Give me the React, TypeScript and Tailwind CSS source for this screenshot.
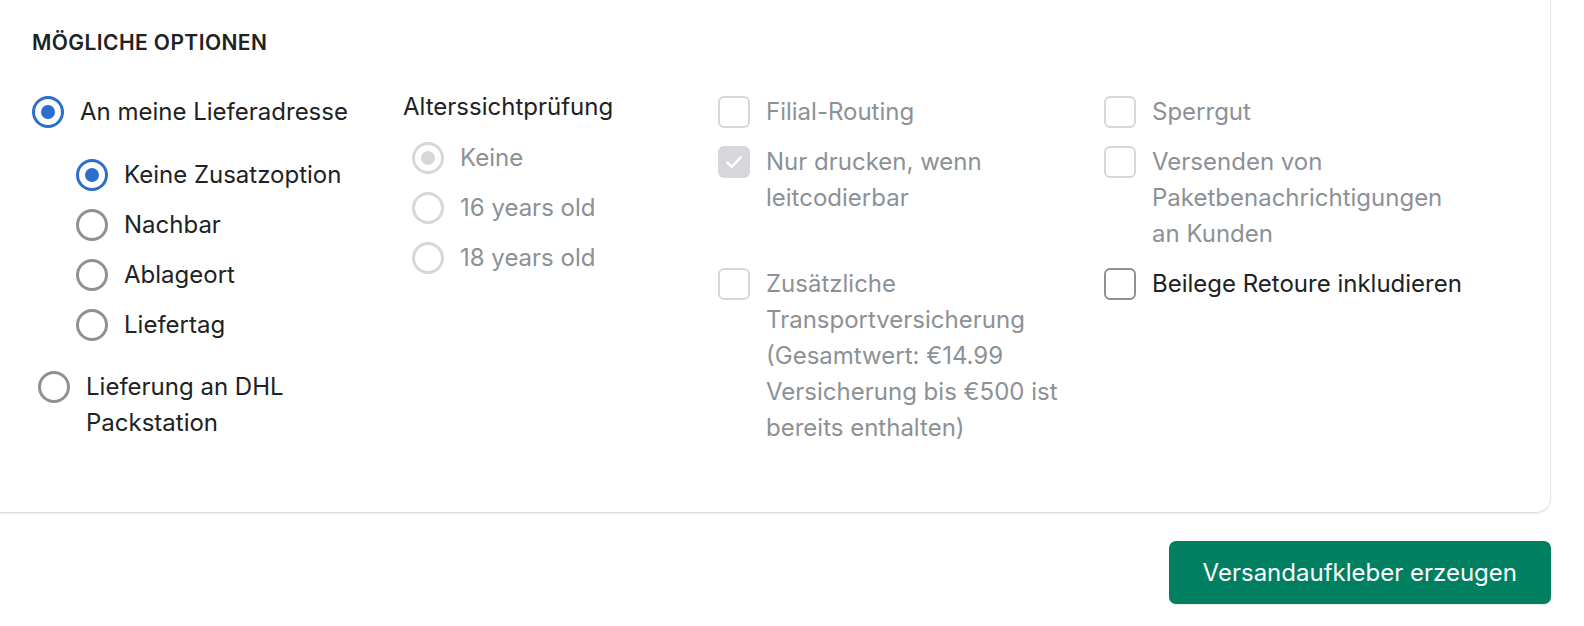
import { FC, ReactNode } from 'react';

const FONT = { fontFamily: 'Inter, "Noto Sans", "Liberation Sans", sans-serif' };

interface RadioProps {
  label: ReactNode;
  checked?: boolean;
  disabled?: boolean;
  className?: string;
}

const Radio: FC<RadioProps> = ({ label, checked, disabled, className = '' }) => {
  const ring = disabled
    ? 'border-[#d5d7da]'
    : checked
    ? 'border-[#2c6ecb]'
    : 'border-[#8c9196]';
  const dot = disabled ? 'bg-[#d5d7da]' : 'bg-[#2c6ecb]';
  return (
    <label className={`flex items-start gap-[16px] ${className}`}>
      <span
        className={`mt-[2px] w-[32px] h-[32px] shrink-0 rounded-full border-[3px] ${ring} flex items-center justify-center bg-white`}
      >
        {checked && <span className={`w-[14px] h-[14px] rounded-full ${dot}`} />}
      </span>
      <span className={`leading-[36px] ${disabled ? 'text-[#8c9196]' : 'text-[#202223]'}`}>
        {label}
      </span>
    </label>
  );
};

interface CheckProps {
  label: ReactNode;
  checked?: boolean;
  disabled?: boolean;
}

const Check: FC<CheckProps> = ({ label, checked, disabled }) => {
  let box = 'border-[2px] border-[#8c9196] bg-white';
  if (disabled) box = checked ? 'bg-[#d5d7da]' : 'border-[2px] border-[#d5d7da] bg-white';
  return (
    <label className="flex items-start gap-[16px]">
      <span
        className={`mt-[2px] w-[32px] h-[32px] shrink-0 rounded-[6px] ${box} flex items-center justify-center`}
      >
        {checked && (
          <svg viewBox="0 0 20 20" className="w-[24px] h-[24px]" fill="none">
            <path d="M4.5 10.5l3.6 3.6L15.5 6.2" stroke="#fff" strokeWidth="2.2" strokeLinecap="round" strokeLinejoin="round" />
          </svg>
        )}
      </span>
      <span className={`leading-[36px] ${disabled ? 'text-[#8c9196]' : 'text-[#202223]'}`}>
        {label}
      </span>
    </label>
  );
};

export default function App() {
  return (
    <div className="min-h-[626px] w-[1584px] bg-white overflow-hidden text-[24px]" style={FONT}>
      <div className="ml-[-10px] w-[1560px] bg-white rounded-br-[14px] shadow-[0_1px_3px_rgba(0,0,0,0.15),0_0_0_1px_rgba(63,63,68,0.05)] pl-[42px] pr-[32px] pt-[30px] pb-[66px]">
        <h2 className="text-[21px] font-semibold tracking-[0.02em] text-[#202223] uppercase leading-[26px]">
          Mögliche Optionen
        </h2>

        <div className="flex mt-[38px]">
          {/* Zustellung */}
          <div className="w-[371px] shrink-0">
            <Radio label="An meine Lieferadresse" checked />
            <div className="pl-[44px] mt-[27px] flex flex-col gap-[14px]">
              <Radio label="Keine Zusatzoption" checked />
              <Radio label="Nachbar" />
              <Radio label="Ablageort" />
              <Radio label="Liefertag" />
            </div>
            <Radio
              className="pl-[6px] mt-[26px] w-[300px]"
              label={<>Lieferung an DHL<br />Packstation</>}
            />
          </div>

          {/* Alterssichtprüfung */}
          <div className="w-[315px] shrink-0 -mt-[5px]">
            <div className="leading-[36px] text-[#202223]">Alterssichtprüfung</div>
            <div className="pl-[9px] mt-[15px] flex flex-col gap-[14px]">
              <Radio label="Keine" checked disabled />
              <Radio label="16 years old" disabled />
              <Radio label="18 years old" disabled />
            </div>
          </div>

          {/* Zusatzleistungen */}
          <div className="grid grid-cols-[386px_366px] gap-y-[14px] items-start">
            <Check label="Filial-Routing" disabled />
            <Check label="Sperrgut" disabled />
            <Check label="Nur drucken, wenn leitcodierbar" checked disabled />
            <Check label="Versenden von Paketbenachrichtigungen an Kunden" disabled />
            <div className="pr-[4px]">
              <Check
                label="Zusätzliche Transportversicherung (Gesamtwert: €14.99 Versicherung bis €500 ist bereits enthalten)"
                disabled
              />
            </div>
            <Check label="Beilege Retoure inkludieren" />
          </div>
        </div>
      </div>

      <div className="flex justify-end pr-[33px] mt-[29px]">
        <button className="h-[63px] px-[34px] rounded-[7px] bg-[#008060] text-white text-[24px] leading-[36px] shadow-[0_1px_0_rgba(0,0,0,0.08)]">
          Versandaufkleber erzeugen
        </button>
      </div>
    </div>
  );
}
